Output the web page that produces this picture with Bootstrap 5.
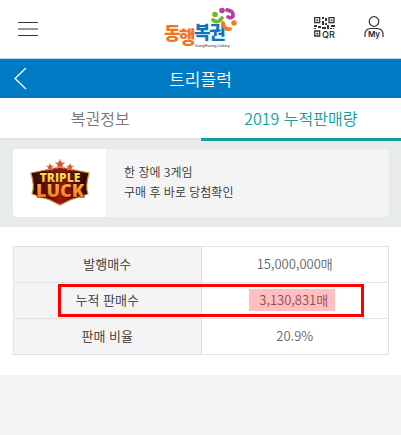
<!DOCTYPE html>
<html lang="ko">
<head>
<meta charset="utf-8">
<meta name="viewport" content="width=device-width, initial-scale=1">
<title>트리플럭</title>
<link href="https://cdn.jsdelivr.net/npm/bootstrap@5.3.0/dist/css/bootstrap.min.css" rel="stylesheet">
<style>
body{font-family:"Noto Sans CJK KR","Noto Sans",sans-serif;font-weight:350;font-size:13px;line-height:20px;background:#f4f4f4;color:#333}
svg{display:block}
.site-head{height:59px;padding:0 16px 2px;border-bottom:1px solid #b5d6ea}
.site-head .side{flex:1 1 0}
.title-bar{height:39px;background:#007bc3;color:#fff;padding:0 12px}
.title-bar h1{font-size:17px;line-height:24px;font-weight:350}
.title-bar .side{flex:1 1 0}
.tabs .nav-link{height:43px;padding:8px 0;font-size:16px;line-height:24px;color:#777;border-radius:0;border-bottom:3px solid transparent}
.tabs{height:41px;border-bottom:1px solid #dfe2e3}
.tabs .nav-link.active{color:#14a097;border-bottom-color:#14a097}
.summary{background:#e8ebec;padding:10px 12px 10px 13px}
.game{background:#f4f4f4;border-radius:4px;height:68px;overflow:hidden}
.game-logo{width:93px}
.game p{padding:0 0 2px 18px;font-size:12px}
.sales{padding:19px 12px 20px 13px}
.sales table{border-color:#e2e2e2}
.sales th,.sales td{width:50%;height:36px;padding:7px 0;font-size:13px;line-height:20px;text-align:center;background:#fff;color:#666}
.sales th{font-weight:350;background:#f4f4f4;color:#333}
.hit{display:inline-block;background:#ffbfc1;color:#8c4e50;padding:0 7px 0 10px;height:22px;line-height:22px;margin:-1px 5px -1px 0}
.marker{left:45px;right:25px;top:38px;height:33px;border:3px solid #f00;pointer-events:none}
</style>
</head>
<body>
<header class="site-head bg-white d-flex align-items-center">
  <div class="side">
    <button class="btn p-0 border-0" type="button" aria-label="메뉴"><svg width="24" height="20" viewBox="0 0 24 20" stroke="#333" stroke-width="1.2"><path d="M2 3.500H22M2 10H22M2 16.500H22"/></svg></button>
  </div>
  <a href="#" aria-label="동행복권" class="d-block">
    <svg width="76" height="44" viewBox="0 0 76 44" font-family="Noto Sans CJK KR,sans-serif" font-weight="900" font-size="18">
      <g fill="#ef7622"><text x="1" y="34">동</text><text x="16" y="38">행</text></g>
      <g fill="#0877be"><text x="31" y="33">복</text><text x="46" y="33">권</text></g>
      <text x="32" y="41" font-family="Liberation Sans,sans-serif" font-weight="400" font-size="4" fill="#333">DongHaeng Lottery</text>
      <g fill="none" stroke-width="3.800" stroke-linecap="round">
        <path d="M50 14Q55 18 59 12" stroke="#72b62b"/>
        <path d="M64 4Q71 5 70 10Q68 13 65 11" stroke="#b5429a"/>
        <path d="M60 17Q61 24 67 23" stroke="#f07d25"/>
      </g>
      <circle cx="52" cy="8.500" r="2.800" fill="#72b62b"/><circle cx="59" cy="4.500" r="2.800" fill="#b5429a"/><circle cx="71" cy="17" r="2.800" fill="#f07d25"/>
    </svg>
  </a>
  <div class="side d-flex justify-content-end gap-4">
    <button class="btn p-0 border-0" type="button" aria-label="QR"><svg width="26" height="26" viewBox="0 0 26 26"><g fill="none" stroke="#333" stroke-width="1.300"><path d="M1.700 2.700h5v5h-5zM16 2.700h5v5h-5zM1.700 16h5v5h-5z"/></g><path fill="#333" d="M3.500 4.500h1.700v1.700H3.500zM17.700 4.500h1.700v1.700h-1.700zM3.500 17.700h1.700v1.700H3.500zM9 2h2v2H9zM12 3h2v3h-2zM9 6h2v4H9zM12 8h2v2h-2zM1 10h3v2H1zM5 11h3v2H5zM9 12h4v2H9zM14 10h2v4h-2zM18 10h4v2h-4zM1 13h2v1H1zM17 13h2v1h-2zM20 13h1v1h-1z"/><text x="9" y="23" font-family="Inter,sans-serif" font-weight="500" font-size="9" fill="#222">QR</text></svg></button>
    <button class="btn p-0 border-0" type="button" aria-label="My"><svg width="22" height="26" viewBox="0 0 22 26"><g fill="none" stroke="#333" stroke-width="1.200"><circle cx="11" cy="6.500" r="4.800"/><path d="M2 22V19Q2 14 8 13.500H14Q20 14 20 19V22"/></g><text x="11" y="22" text-anchor="middle" font-family="Inter,sans-serif" font-weight="600" font-size="8" fill="#222">My</text></svg></button>
  </div>
</header>
<div class="title-bar d-flex align-items-center">
  <div class="side"><a href="#" aria-label="뒤로"><svg width="16" height="24" viewBox="0 0 16 24" fill="none" stroke="#fff" stroke-width="1.300"><path d="M14 1L3 11.500L14 22"/></svg></a></div>
  <h1 class="m-0">트리플럭</h1>
  <div class="side"></div>
</div>
<nav class="tabs nav nav-fill nav-justified bg-white">
  <a class="nav-link" href="#">복권정보</a>
  <a class="nav-link active" aria-current="page" href="#">2019 누적판매량</a>
</nav>
<main>
  <section class="summary">
    <div class="game d-flex align-items-center">
      <div class="game-logo bg-white h-100 d-flex align-items-center justify-content-center flex-shrink-0">
        <svg width="60" height="50" viewBox="0 0 60 50" role="img" aria-label="TRIPLE LUCK">
          <defs>
            <linearGradient id="gold" x2="0" y2="1"><stop stop-color="#fff36a"/><stop offset="1" stop-color="#f2b51c"/></linearGradient>
            <linearGradient id="fire" x2="0" y2="1"><stop stop-color="#ffc447"/><stop offset="1" stop-color="#f5681c"/></linearGradient>
            <linearGradient id="shield"><stop stop-color="#260606"/><stop offset=".5" stop-color="#9c1712"/><stop offset="1" stop-color="#260606"/></linearGradient>
            <path id="star" d="M0-5L1.500-1.600L5-1.500L2.300.9L3.200 4.500L0 2.500L-3.200 4.500L-2.300.9L-5-1.500L-1.500-1.600Z"/>
          </defs>
          <path d="M1 15L30 9L59 15Q55 29 58 36L40 42L30 47L20 42L2 36Q5 28 1 15Z" fill="url(#shield)" stroke="#c98a30" stroke-width="1.200"/>
          <g fill="#df4b35" stroke="#f3b38c" stroke-width=".6"><use href="#star" transform="translate(30 6)"/><use href="#star" transform="translate(20 9) scale(.75)"/><use href="#star" transform="translate(40 9) scale(.75)"/></g>
          <g text-anchor="middle" font-family="Open Sans,sans-serif" font-weight="800" stroke="#2b0905" stroke-width="1" paint-order="stroke" stroke-linejoin="round">
            <text x="30" y="24" font-size="12" fill="url(#gold)">TRIPLE</text>
            <text x="30" y="39" font-size="18" fill="url(#fire)">LUCK</text>
          </g>
        </svg>
      </div>
      <p class="m-0">한 장에 3게임<br>구매 후 바로 당첨확인</p>
    </div>
  </section>
  <section class="sales bg-white">
    <div class="position-relative">
      <table class="table table-bordered m-0">
        <tbody>
          <tr><th scope="row">발행매수</th><td>15,000,000매</td></tr>
          <tr><th scope="row">누적 판매수</th><td><span class="hit">3,130,831매</span></td></tr>
          <tr><th scope="row">판매 비율</th><td>20.9%</td></tr>
        </tbody>
      </table>
      <div class="marker position-absolute"></div>
    </div>
  </section>
</main>
<script src="https://cdn.jsdelivr.net/npm/bootstrap@5.3.0/dist/js/bootstrap.bundle.min.js"></script>
</body>
</html>
